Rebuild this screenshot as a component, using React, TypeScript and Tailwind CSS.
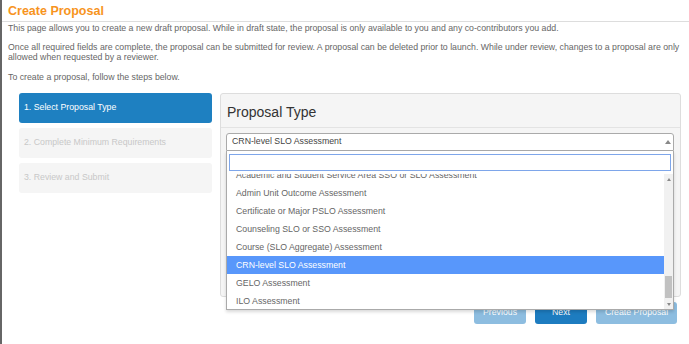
export default function App() {
  const items = [
    "Academic and Student Service Area SSO or SLO Assessment",
    "Admin Unit Outcome Assessment",
    "Certificate or Major PSLO Assessment",
    "Counseling SLO or SSO Assessment",
    "Course (SLO Aggregate) Assessment",
    "CRN-level SLO Assessment",
    "GELO Assessment",
    "ILO Assessment",
  ];
  return (
    <div className="relative w-[689px] h-[344px] overflow-hidden bg-white border-l-2 border-[#666] font-['Liberation_Sans',Arial,sans-serif] text-[8.75px] text-[#666]">
      <h1 className="h-[22px] border-b border-[#ddd] pl-[6px] pt-[2.5px] text-[12.5px] leading-[16px] font-bold text-[#f7941d]">
        Create Proposal
      </h1>
      <div className="pl-[6px] leading-[10.5px] whitespace-nowrap">
        <p className="mt-[0.5px] mb-[8.75px]">
          This page allows you to create a new draft proposal. While in draft state, the proposal is only available to you and any co-contributors you add.
        </p>
        <p className="mb-[8.75px]">
          Once all required fields are complete, the proposal can be submitted for review. A proposal can be deleted prior to launch. While under review, changes to a proposal are only
          <br />
          allowed when requested by a reviewer.
        </p>
        <p>To create a proposal, follow the steps below.</p>
      </div>

      <div className="mt-[11px] flex items-start gap-[8px] pl-[17px]">
        <div className="flex w-[193px] flex-col gap-[5px]">
          <div className="flex h-[30px] items-center rounded-[3px] bg-[#1e80c1] px-[5px] text-white">
            1. Select Proposal Type
          </div>
          <div className="flex h-[30px] items-center rounded-[3px] bg-[#f5f5f5] px-[5px] text-[#c8c8c8]">
            2. Complete Minimum Requirements
          </div>
          <div className="flex h-[30px] items-center rounded-[3px] bg-[#f5f5f5] px-[5px] text-[#c8c8c8]">
            3. Review and Submit
          </div>
        </div>

        <div className="flex w-[461px] flex-col">
          <div className="h-[204px] rounded-[3px] border border-[#ddd] bg-[#f5f5f5]">
            <div className="h-[34px] border-b border-[#e3e3e3] pl-[6px] pt-[10px] text-[14px] leading-[17px] text-[#333]">
              Proposal Type
            </div>
            <div className="pl-[5px] pr-[6px] pt-[5px]">
              <div className="relative flex h-[18px] items-center rounded-t-[3px] border border-[#aaa] bg-white pl-[5px] text-[#444]">
                <span>CRN-level SLO Assessment</span>
                <span className="ml-auto mr-[2px] h-0 w-0 border-x-[3px] border-b-[4px] border-x-transparent border-b-[#888]" />

                <div className="absolute left-[-1px] right-[-1px] top-[17px] z-10 h-[159px] border border-t-0 border-[#aaa] bg-white shadow-[0_2px_3px_rgba(0,0,0,0.15)]">
                  <div className="px-[2px] pt-[3px]">
                    <div className="h-[17px] border border-[#7ea6ea] bg-white" />
                  </div>
                  <div className="mt-[3px] flex h-[135px] overflow-hidden">
                    <div className="flex-1 overflow-hidden">
                      <div className="mt-[-8px]">
                        {items.map((it) => (
                          <div
                            key={it}
                            className={
                              it === "CRN-level SLO Assessment"
                                ? "h-[18px] whitespace-nowrap bg-[#5897fb] pl-[9px] leading-[18px] text-white"
                                : "h-[18px] whitespace-nowrap pl-[9px] leading-[18px] text-[#666]"
                            }
                          >
                            {it}
                          </div>
                        ))}
                      </div>
                    </div>
                    <div className="flex w-[9px] flex-col bg-[#f1f1f1]">
                      <div className="flex h-[10px] items-center justify-center">
                        <span className="h-0 w-0 border-x-[2.5px] border-b-[3px] border-x-transparent border-b-[#8a8a8a]" />
                      </div>
                      <div className="flex-1">
                        <div className="mx-auto mt-[92px] h-[22px] w-[7px] bg-[#c1c1c1]" />
                      </div>
                      <div className="flex h-[10px] items-center justify-center">
                        <span className="h-0 w-0 border-x-[2.5px] border-t-[3px] border-x-transparent border-t-[#8a8a8a]" />
                      </div>
                    </div>
                  </div>
                </div>
              </div>
            </div>
          </div>

          <div className="mt-[5px] flex justify-end gap-[9px] pr-[4px] text-white">
            <div className="flex h-[22px] w-[52px] items-center justify-center rounded-[3px] bg-[#8dbde0]">Previous</div>
            <div className="flex h-[22px] w-[52px] items-center justify-center rounded-[3px] bg-[#1d7cc0]">Next</div>
            <div className="flex h-[22px] w-[81px] items-center justify-center rounded-[3px] bg-[#8dbde0]">Create Proposal</div>
          </div>
        </div>
      </div>
    </div>
  );
}
